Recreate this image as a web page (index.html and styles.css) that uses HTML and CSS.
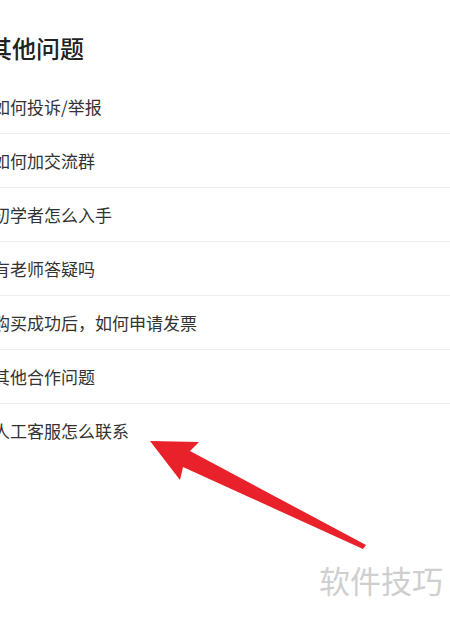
FILE: index.html
```html
<!DOCTYPE html>
<html lang="zh-CN">
<head>
    <meta charset="UTF-8">
    <meta name="viewport" content="width=device-width, initial-scale=1.0">
    <title>其他问题</title>
    <link rel="stylesheet" href="styles.css">
</head>
<body>
    <div class="page">
        <h2 class="section-title">其他问题</h2>
        <ul class="faq-list">
            <li class="faq-item"><span>如何投诉/举报</span><svg class="chevron" viewBox="0 0 8 14"><path d="M1 1l6 6-6 6"/></svg></li>
            <li class="faq-item"><span>如何加交流群</span><svg class="chevron" viewBox="0 0 8 14"><path d="M1 1l6 6-6 6"/></svg></li>
            <li class="faq-item"><span>初学者怎么入手</span><svg class="chevron" viewBox="0 0 8 14"><path d="M1 1l6 6-6 6"/></svg></li>
            <li class="faq-item"><span>有老师答疑吗</span><svg class="chevron" viewBox="0 0 8 14"><path d="M1 1l6 6-6 6"/></svg></li>
            <li class="faq-item"><span>购买成功后，如何申请发票</span><svg class="chevron" viewBox="0 0 8 14"><path d="M1 1l6 6-6 6"/></svg></li>
            <li class="faq-item"><span>其他合作问题</span><svg class="chevron" viewBox="0 0 8 14"><path d="M1 1l6 6-6 6"/></svg></li>
            <li class="faq-item"><span>人工客服怎么联系</span><svg class="chevron" viewBox="0 0 8 14"><path d="M1 1l6 6-6 6"/></svg></li>
        </ul>
    </div>

    <!-- annotation arrow drawn over the screenshot -->
    <svg class="arrow" viewBox="0 0 450 618">
        <polygon points="150,441 199,442 190,451 366,545 363,549 183,467 180,480"/>
    </svg>

    <div class="watermark">软件技巧</div>
</body>
</html>
```

FILE: styles.css
```css
html, body {
    margin: 0;
    padding: 0;
    background: #fff;
    overflow: hidden;
}

body {
    width: 450px;
    height: 618px;
    position: relative;
    font-family: "Noto Sans CJK SC", "Noto Sans", sans-serif;
    color: #333;
}

.page {
    margin-left: -7px;
    width: 466px;
}

.section-title {
    margin: 0;
    height: 80px;
    padding-top: 32px;
    box-sizing: border-box;
    margin-left: -5px;
    font-size: 24px;
    line-height: 32px;
    font-weight: 500;
    color: #222;
}

.faq-list {
    list-style: none;
    margin: 0;
    padding: 0;
}

.faq-item {
    display: flex;
    align-items: center;
    justify-content: space-between;
    height: 53px;
    border-bottom: 1px solid #eeeeee;
    font-size: 17px;
    color: #333;
}

.faq-item:last-child {
    border-bottom: none;
}

.chevron {
    width: 8px;
    height: 14px;
    fill: none;
    stroke: #999;
    stroke-width: 1.4;
}

.arrow {
    position: absolute;
    left: 0;
    top: 0;
    width: 450px;
    height: 618px;
    fill: #e8212a;
}

.watermark {
    position: absolute;
    left: 319px;
    top: 560px;
    font-size: 31px;
    line-height: 40px;
    color: #cfcfcf;
    background: #fff;
}
```
